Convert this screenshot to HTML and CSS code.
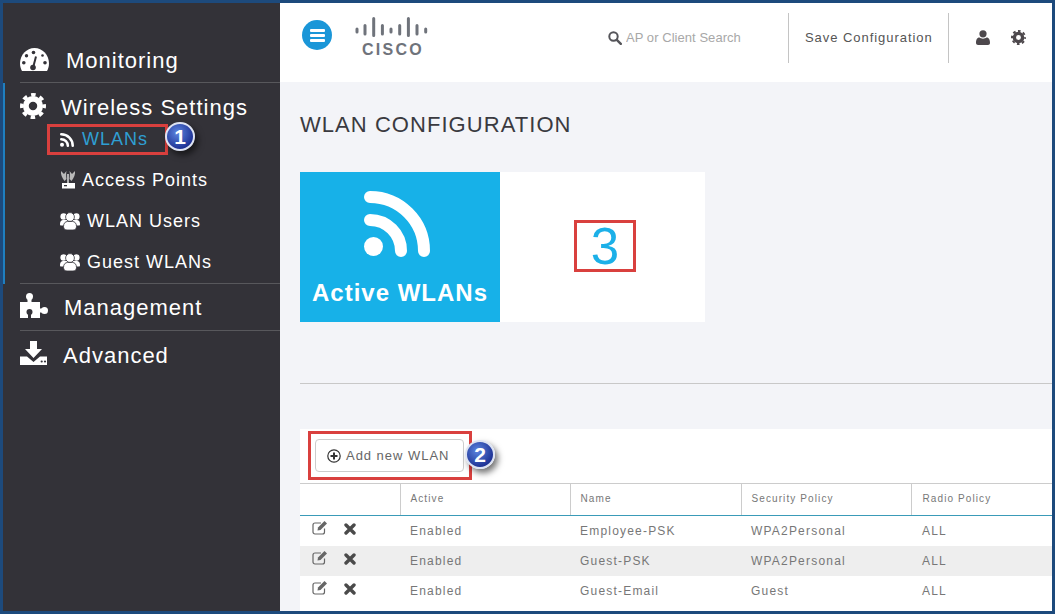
FILE: index.html
```html
<!DOCTYPE html>
<html>
<head>
    <meta charset="utf-8">
    <title>WLAN Configuration</title>
    <link rel="stylesheet" href="styles.css">
</head>
<body>
<svg class="icon-defs">
    <symbol id="i-gear" viewBox="0 0 24 24">
        <circle cx="12" cy="12" r="6.6" fill="none" stroke="currentColor" stroke-width="5.4"/>
        <circle cx="12" cy="12" r="10.4" fill="none" stroke="currentColor" stroke-width="3.2" stroke-dasharray="4.2 3.97" stroke-dashoffset="2.1"/>
    </symbol>
    <symbol id="i-rss" viewBox="0 0 66 66">
        <path d="M6 6A54 54 0 0 1 60 60M6 29A31 31 0 0 1 37 60" fill="none" stroke="currentColor" stroke-width="12" stroke-linecap="round"/>
        <circle cx="9.5" cy="55.5" r="9.5" fill="currentColor"/>
    </symbol>
    <symbol id="i-users" viewBox="0 0 20 18">
        <circle cx="3.600" cy="4.500" r="3.200" fill="currentColor"/>
        <circle cx="16.400" cy="4.500" r="3.200" fill="currentColor"/>
        <path d="M0 12.500C0 9 1.500 8 3.500 8H16.500C18.500 8 20 9 20 12.500C20 13 19.600 13.500 19 13.500H1C.4 13.500 0 13 0 12.500Z" fill="currentColor"/>
        <circle cx="10" cy="5" r="4.400" fill="currentColor" stroke="#333238" stroke-width="0.8"/>
        <path d="M3.500 14.500C3.500 11 5.500 9.500 7.500 9.500H12.500C14.500 9.500 16.500 11 16.500 14.500C16.500 17 15 18 13 18H7C5 18 3.500 17 3.500 14.500Z" fill="currentColor" stroke="#333238" stroke-width="0.8"/>
    </symbol>
    <symbol id="i-x" viewBox="0 0 12 12">
        <path d="M2 2L10 10M10 2L2 10" stroke="currentColor" stroke-width="3.4" stroke-linecap="round"/>
    </symbol>
    <symbol id="i-edit" viewBox="0 0 16 15">
        <path d="M12.500 8.500V12C12.500 13.200 11.700 14 10.500 14H3C1.800 14 1 13.200 1 12V5C1 3.800 1.800 3 3 3H9" fill="none" stroke="currentColor" stroke-width="1.200"/>
        <path d="M6 7.500L12.500 1L15 3.500L8.500 10L5.500 10.500Z" fill="currentColor"/>
    </symbol>
</svg>

<div class="frame">
    <div class="sidebar">
        <div class="nav-section nav-first">
            <div class="nav-inner">
                <svg class="nav-icon icon-gauge" viewBox="0 0 29 23">
                    <path d="M2 23C.7 20.500 0 18 0 15.500C0 7 6.500 0 14.500 0S29 7 29 15.500C29 18 28.300 20.500 27 23Z" fill="currentColor"/>
                    <circle cx="3.800" cy="14.700" r="1.800" fill="#333238"/>
                    <circle cx="6.500" cy="7.700" r="1.700" fill="#333238"/>
                    <circle cx="13.500" cy="4.500" r="1.800" fill="#333238"/>
                    <circle cx="22.500" cy="7.500" r="1.300" fill="#333238"/>
                    <circle cx="25" cy="14.700" r="1.800" fill="#333238"/>
                    <path d="M16 8.500L13.500 18" stroke="#333238" stroke-width="2"/>
                    <circle cx="13" cy="19.500" r="2.800" fill="#333238"/>
                </svg>
                <span class="nav-label">Monitoring</span>
            </div>
        </div>
        <div class="nav-section nav-active">
            <div class="nav-inner nav-stack">
                <div class="nav-head">
                    <svg class="icon-wireless"><use href="#i-gear"/></svg>
                    <span class="nav-label">Wireless Settings</span>
                </div>
                <ul class="sub-list">
                    <li class="sub-item">
                        <a class="sub-link current" href="#">
                            <svg class="sub-rss"><use href="#i-rss"/></svg>WLANs
                            <span class="badge badge-one">1</span>
                        </a>
                    </li>
                    <li class="sub-item">
                        <a class="sub-link" href="#">
                            <svg class="sub-ap" viewBox="0 0 16 19">
                                <path d="M1 1C.5 4 2 8 4.500 11L6.500 9C6 6 6 3 6.500 1L4 4Z" fill="#b9b9b9"/>
                                <path d="M15 1C15.500 4 14 8 11.500 11L9.500 9C10 6 10 3 9.500 1L12 4Z" fill="#b9b9b9"/>
                                <path d="M8 4V13" stroke="#e8e8e8" stroke-width="1.400"/>
                                <rect x="2" y="13" width="13" height="5.500" fill="#fff"/>
                                <rect x="4" y="15" width="3" height="1.300" fill="#333238"/>
                            </svg>Access Points
                        </a>
                    </li>
                    <li class="sub-item">
                        <a class="sub-link" href="#"><svg class="sub-users"><use href="#i-users"/></svg>WLAN Users</a>
                    </li>
                    <li class="sub-item">
                        <a class="sub-link" href="#"><svg class="sub-users"><use href="#i-users"/></svg>Guest WLANs</a>
                    </li>
                </ul>
            </div>
        </div>
        <div class="nav-section">
            <div class="nav-inner nav-short">
                <svg class="nav-icon icon-puzzle" viewBox="0 0 28 26">
                    <circle cx="9.500" cy="3.500" r="3.500" fill="currentColor"/>
                    <rect x="7.500" y="3" width="4" height="7" fill="currentColor"/>
                    <rect x="0" y="9" width="20" height="16" fill="currentColor"/>
                    <rect x="19" y="15.500" width="5" height="4" fill="currentColor"/>
                    <circle cx="24.500" cy="17.500" r="3.500" fill="currentColor"/>
                    <circle cx="9.500" cy="19" r="3" fill="#333238"/>
                    <rect x="8" y="19" width="3" height="6" fill="#333238"/>
                </svg>
                <span class="nav-label">Management</span>
            </div>
        </div>
        <div class="nav-section">
            <div class="nav-inner nav-short nav-last">
                <svg class="nav-icon icon-download" viewBox="0 0 27 24">
                    <path d="M10 0H17V8H22L13.500 17L5 8H10Z" fill="currentColor"/>
                    <path d="M0 24V15.500H7L13.500 21L20 15.500H27V24Z" fill="currentColor"/>
                    <circle cx="21.700" cy="20.500" r="1.100" fill="#333238"/>
                    <circle cx="25" cy="20.500" r="1.100" fill="#333238"/>
                </svg>
                <span class="nav-label">Advanced</span>
            </div>
        </div>
    </div>

    <div class="main">
        <div class="topbar">
            <button class="menu-btn">
                <span></span><span></span><span></span>
            </button>
            <div class="logo">
                <svg class="logo-bars" viewBox="0 0 74 20">
                    <path d="M2 12V15M10 8.500V17M18.700 1.500V18.500M27.400 8.500V17M36 12V15M44.700 8.500V17M53.400 1.500V18.500M62 8.500V17M70.700 12V15" stroke="#6f737b" stroke-width="3" stroke-linecap="round"/>
                </svg>
                <span class="logo-text">CISCO</span>
            </div>
            <div class="search">
                <svg class="search-icon" viewBox="0 0 14 14">
                    <circle cx="5.500" cy="5.500" r="4.200" fill="none" stroke="currentColor" stroke-width="2"/>
                    <path d="M8.800 8.800L12.800 12.800" stroke="currentColor" stroke-width="2.400" stroke-linecap="round"/>
                </svg>
                <input class="search-input" type="text" placeholder="AP or Client Search">
            </div>
            <div class="save-config">Save Configuration</div>
            <div class="top-icons">
                <svg class="top-user" viewBox="0 0 14 15">
                    <circle cx="7" cy="3.800" r="3.600" fill="currentColor"/>
                    <path d="M0 13C0 9 1.500 7.500 3.500 7.500C5 9 9 9 10.500 7.500C12.500 7.500 14 9 14 13C14 14.300 13 15 12 15H2C1 15 0 14.300 0 13Z" fill="currentColor"/>
                </svg>
                <svg class="top-gear"><use href="#i-gear"/></svg>
            </div>
        </div>

        <div class="content">
            <h2 class="page-title">WLAN CONFIGURATION</h2>
            <div class="tile">
                <div class="tile-left">
                    <svg class="tile-rss"><use href="#i-rss"/></svg>
                    <div class="tile-label">Active WLANs</div>
                </div>
                <div class="tile-right">
                    <div class="tile-count">3</div>
                </div>
            </div>
            <hr class="divider">
            <div class="panel">
                <div class="toolbar">
                    <div class="add-box">
                        <button class="add-btn">
                            <svg class="add-icon" viewBox="0 0 14 14">
                                <circle cx="7" cy="7" r="6.200" fill="none" stroke="currentColor" stroke-width="1.200"/>
                                <path d="M7 3.500V10.500M3.500 7H10.500" stroke="currentColor" stroke-width="2"/>
                            </svg>Add new WLAN
                        </button>
                        <span class="badge badge-two">2</span>
                    </div>
                </div>
                <table class="wlan-table">
                    <thead>
                        <tr>
                            <th class="col-actions"></th>
                            <th class="col-active">Active</th>
                            <th class="col-name">Name</th>
                            <th class="col-security">Security Policy</th>
                            <th class="col-radio">Radio Policy</th>
                        </tr>
                    </thead>
                    <tbody>
                        <tr>
                            <td class="cell-actions"><svg class="act-edit"><use href="#i-edit"/></svg><svg class="act-x"><use href="#i-x"/></svg></td>
                            <td>Enabled</td><td>Employee-PSK</td><td>WPA2Personal</td><td class="cell-radio">ALL</td>
                        </tr>
                        <tr class="row-alt">
                            <td class="cell-actions"><svg class="act-edit"><use href="#i-edit"/></svg><svg class="act-x"><use href="#i-x"/></svg></td>
                            <td>Enabled</td><td>Guest-PSK</td><td>WPA2Personal</td><td class="cell-radio">ALL</td>
                        </tr>
                        <tr>
                            <td class="cell-actions"><svg class="act-edit"><use href="#i-edit"/></svg><svg class="act-x"><use href="#i-x"/></svg></td>
                            <td>Enabled</td><td>Guest-Email</td><td>Guest</td><td class="cell-radio">ALL</td>
                        </tr>
                    </tbody>
                </table>
            </div>
        </div>
    </div>
</div>
</body>
</html>
```

FILE: styles.css
```css
* {
    box-sizing: border-box;
}
html, body {
    margin: 0;
    padding: 0;
}
body {
    font-family: "Liberation Sans", Arial, sans-serif;
    background-color: #1d4a7c;
}
.icon-defs {
    display: none;
}
.frame {
    width: 1055px;
    height: 614px;
    border: 3px solid #1d4a7c;
    display: flex;
    overflow: hidden;
}

/* left menu */
.sidebar {
    width: 277px;
    flex-shrink: 0;
    background-color: #333238;
    color: #fff;
}
.nav-section {
    padding-left: 17px;
}
.nav-active {
    box-shadow: inset 2px 0 0 #1f7fc0;
}
.nav-inner {
    display: flex;
    align-items: center;
    height: 47px;
    border-bottom: 1px solid #58585c;
}
.nav-first .nav-inner {
    height: 80px;
    padding-top: 36px;
}
.nav-short {
    height: 47px;
    padding-top: 2px;
}
.nav-last {
    border-bottom: none;
}
.nav-stack {
    display: block;
    height: 201px;
}
.nav-head {
    display: flex;
    align-items: center;
    height: 35px;
    padding-top: 14px;
}
.nav-label {
    font-size: 22px;
    letter-spacing: 1px;
    color: #fff;
}
.nav-icon {
    flex-shrink: 0;
    color: #fff;
}
.icon-gauge {
    width: 29px;
    height: 23px;
    margin: 0 17px 2px 0;
}
.icon-wireless {
    width: 26px;
    height: 26px;
    margin: 0 15px 3px 0;
    color: #fff;
}
.icon-puzzle {
    width: 28px;
    height: 26px;
    margin: 0 16px 5px 0;
}
.icon-download {
    width: 27px;
    height: 24px;
    margin: 0 16px 6px 0;
}
.sub-list {
    list-style: none;
    margin: 0;
    padding: 0 0 0 40px;
}
.sub-item {
    height: 41px;
    display: flex;
    align-items: center;
    padding-top: 2px;
}
.sub-link {
    display: flex;
    align-items: center;
    position: relative;
    color: #fff;
    font-size: 18px;
    letter-spacing: 1px;
    text-decoration: none;
}
.sub-link.current {
    color: #2f9fd3;
    border: 3px solid #d9403e;
    width: 121px;
    height: 31px;
    margin-left: -13px;
    padding-left: 10px;
}
.sub-rss {
    width: 14px;
    height: 14px;
    margin-right: 8px;
    color: #fff;
}
.sub-ap {
    width: 16px;
    height: 19px;
    margin: 0 6px 2px 0;
}
.sub-users {
    width: 20px;
    height: 18px;
    margin: 0 7px 2px 0;
    color: #fff;
}
.badge {
    position: absolute;
    width: 30px;
    height: 29px;
    border-radius: 50%;
    border: 2px solid #dde3f2;
    background: radial-gradient(circle at 40% 35%, #5c86e0, #1c2f92 75%);
    box-shadow: 3px 4px 6px rgba(0, 0, 0, 0.55);
    color: #fff;
    font-size: 21px;
    font-weight: bold;
    line-height: 25px;
    text-align: center;
    letter-spacing: 0;
}
.badge-one {
    left: 115px;
    top: -5px;
}
.badge-two {
    left: 154px;
    top: 6px;
}

/* top bar */
.main {
    flex: 1;
    min-width: 0;
    display: flex;
    flex-direction: column;
    background-color: #f3f4f8;
}
.topbar {
    height: 79px;
    flex-shrink: 0;
    background-color: #fff;
    display: flex;
    align-items: flex-start;
}
.menu-btn {
    width: 30px;
    height: 30px;
    margin: 17px 0 0 22px;
    padding: 0;
    border: none;
    border-radius: 50%;
    background-color: #1a96d8;
    display: flex;
    flex-direction: column;
    align-items: center;
    justify-content: center;
    gap: 2px;
}
.menu-btn span {
    width: 15px;
    height: 3px;
    border-radius: 1px;
    background-color: #fff;
}
.logo {
    width: 74px;
    margin: 14px 0 0 23px;
    display: flex;
    flex-direction: column;
    align-items: center;
}
.logo-bars {
    width: 74px;
    height: 20px;
}
.logo-text {
    margin-top: 4px;
    font-size: 16px;
    font-weight: bold;
    line-height: 18px;
    letter-spacing: 2.3px;
    color: #6f737b;
    margin-right: -2px;
}
.search {
    display: flex;
    align-items: center;
    margin: 27px 0 0 179px;
    color: #55555a;
}
.search-icon {
    width: 14px;
    height: 14px;
    margin-right: 4px;
}
.search-input {
    width: 162px;
    border: none;
    padding: 0;
    outline: none;
    font-family: inherit;
    font-size: 13px;
    letter-spacing: 0.05px;
    background: transparent;
}
.search-input::placeholder {
    color: #a8a8a8;
}
.save-config {
    height: 50px;
    margin-top: 10px;
    width: 161px;
    border-left: 1px solid #c4c4c4;
    border-right: 1px solid #c4c4c4;
    padding: 17px 0 0 16px;
    font-size: 13px;
    letter-spacing: 0.95px;
    color: #555;
    white-space: nowrap;
}
.top-icons {
    display: flex;
    align-items: center;
    gap: 21px;
    margin: 27px 0 0 27px;
    color: #4d484c;
}
.top-user {
    width: 14px;
    height: 15px;
}
.top-gear {
    width: 15px;
    height: 15px;
}

/* page body */
.content {
    flex: 1;
    min-height: 0;
    display: flex;
    flex-direction: column;
    padding-left: 20px;
}
.page-title {
    margin: 30px 0 34px;
    font-size: 22px;
    font-weight: normal;
    line-height: 26px;
    letter-spacing: 1.05px;
    color: #3a3a40;
}
.tile {
    display: flex;
    width: 405px;
    height: 150px;
    flex-shrink: 0;
}
.tile-left {
    width: 200px;
    background-color: #17b1e8;
    display: flex;
    flex-direction: column;
    align-items: center;
    padding-top: 19px;
}
.tile-rss {
    width: 66px;
    height: 66px;
    margin-right: 6px;
    color: #fff;
}
.tile-label {
    margin-top: 22px;
    font-size: 24px;
    font-weight: bold;
    line-height: 28px;
    letter-spacing: 1px;
    color: #fff;
    white-space: nowrap;
}
.tile-right {
    flex: 1;
    background-color: #fff;
    display: flex;
    align-items: flex-start;
    padding: 48px 0 0 74px;
}
.tile-count {
    width: 62px;
    height: 52px;
    border: 3px solid #d9403e;
    font-size: 51px;
    line-height: 48px;
    text-align: center;
    color: #1cb0e8;
}
.divider {
    margin: 61px 0 45px;
    border: none;
    border-top: 1px solid #c8c8c8;
    height: 0;
    width: 100%;
}
.panel {
    flex: 1;
    background-color: #fff;
}
.toolbar {
    height: 54px;
    padding: 2px 0 0 8px;
}
.add-box {
    position: relative;
    width: 164px;
    height: 49px;
    border: 3px solid #d9403e;
    padding: 5px 0 0 4px;
}
.add-btn {
    display: flex;
    align-items: center;
    width: 149px;
    height: 33px;
    padding: 0 0 1px 11px;
    background-color: #fff;
    border: 1px solid #ccc;
    border-radius: 4px;
    font-family: inherit;
    font-size: 13px;
    letter-spacing: 0.97px;
    color: #666;
    white-space: nowrap;
}
.add-icon {
    width: 14px;
    height: 14px;
    margin: 1px 5px 0 0;
    color: #333;
}
.wlan-table {
    width: 100%;
    table-layout: fixed;
    border-collapse: collapse;
}
.wlan-table th {
    height: 32px;
    padding: 0 0 2px 10px;
    border-top: 1px solid #ccc;
    border-bottom: 1px solid #3a9bb8;
    border-left: 1px solid #ccc;
    font-size: 10px;
    font-weight: normal;
    text-align: left;
    letter-spacing: 1.1px;
    color: #777;
}
.wlan-table th.col-actions {
    border-left: none;
}
.col-actions {
    width: 100px;
}
.col-active {
    width: 170px;
}
.col-name {
    width: 171px;
}
.col-security {
    width: 170px;
}
.wlan-table th.col-radio,
.wlan-table td.cell-radio {
    padding-left: 11px;
}
.wlan-table td {
    height: 30px;
    padding: 0 0 0 10px;
    font-size: 12px;
    letter-spacing: 1.2px;
    color: #777;
    white-space: nowrap;
}
.row-alt td {
    background-color: #eeeeee;
}
.wlan-table td.cell-actions {
    padding: 0 0 3px 12px;
    color: #666;
}
.act-edit {
    width: 16px;
    height: 15px;
    margin: 0 16px 4px 0;
    vertical-align: middle;
}
.act-x {
    width: 12px;
    height: 12px;
    vertical-align: middle;
    color: #4a4a4a;
}
```
